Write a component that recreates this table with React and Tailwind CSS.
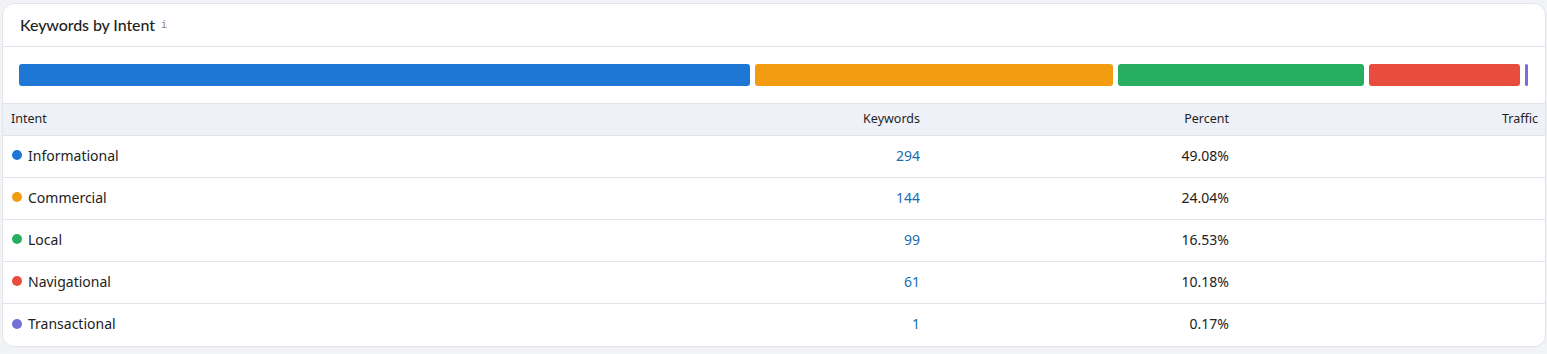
import React from "react";

const rows = [
  { name: "Informational", kw: "294", pct: "49.08%", v: 49.08, dot: "bg-[#1e77d4]" },
  { name: "Commercial", kw: "144", pct: "24.04%", v: 24.04, dot: "bg-[#f39c12]" },
  { name: "Local", kw: "99", pct: "16.53%", v: 16.53, dot: "bg-[#27ae60]" },
  { name: "Navigational", kw: "61", pct: "10.18%", v: 10.18, dot: "bg-[#e74c3c]" },
  { name: "Transactional", kw: "1", pct: "0.17%", v: 0.17, dot: "bg-[#7570d6]" },
];

export default function App() {
  return (
    <div className="w-[1547px] h-[354px] bg-[#f2f3f7] pt-[3px] pl-[2px] pr-[1px]" style={{ fontFamily: '"Noto Sans", sans-serif' }}>
      <div className="bg-white rounded-[12px] border border-[#e4e5ea] overflow-hidden h-[344px]">
        <div className="h-[43px] flex items-center pl-[17px] border-b border-[#e3e4e8]">
          <span className="text-[16px] text-[#1f1f1f] font-medium tracking-[-0.1px]" style={{ fontFamily: "Lato, sans-serif" }}>Keywords by Intent</span>
          <span className="ml-[6px] text-[11px] text-[#8a8a8a] mt-[1px]" style={{ fontFamily: '"DejaVu Sans Mono", monospace' }}>i</span>
        </div>
        <div className="flex gap-[5px] pl-[16px] pr-[17px] pt-[17px] pb-[17px]">
          {rows.map((r) => (
            <div key={r.name} className={`h-[22px] rounded-[3px] ${r.dot}`} style={{ flexGrow: r.v, flexBasis: 0, minWidth: r.v < 1 ? "2px" : undefined }} />
          ))}
        </div>
        <div className="grid grid-cols-[1fr_309px_309px_309px] h-[33px] items-center bg-[#eff1f8] border-y border-[#e3e4e8] text-[12.5px] text-[#1f1f1f] pr-[7px]">
          <div className="pl-[8px]">Intent</div>
          <div className="text-right">Keywords</div>
          <div className="text-right">Percent</div>
          <div className="text-right">Traffic</div>
        </div>
        {rows.map((r, i) => (
          <div key={r.name} className={`grid grid-cols-[1fr_309px_309px_309px] h-[42px] items-center text-[14px] pr-[7px] pb-[3px] ${i < rows.length - 1 ? "border-b border-[#e3e4e8]" : ""}`}>
            <div className="pl-[9px] flex items-center gap-[6px] text-[#222]">
              <span className={`w-[10px] h-[10px] rounded-full ${r.dot}`} />
              <span>{r.name}</span>
            </div>
            <div className="text-right text-[#1a6db3]">{r.kw}</div>
            <div className="text-right text-[#222]">{r.pct}</div>
            <div className="text-right"></div>
          </div>
        ))}
      </div>
    </div>
  );
}
